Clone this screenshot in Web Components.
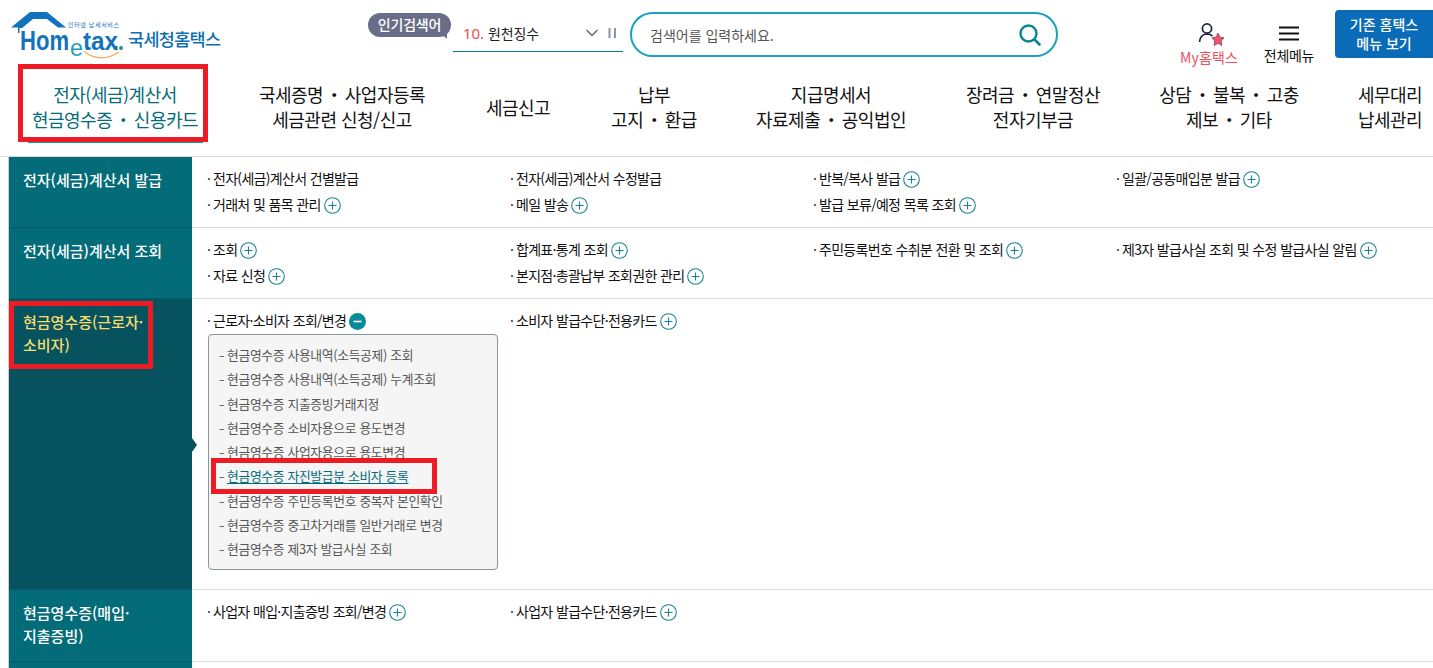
<!DOCTYPE html>
<html lang="ko"><head><meta charset="utf-8"><title>Hometax</title>
<style>
html,body{margin:0;padding:0;background:#fff;overflow:hidden}
body{width:1433px;height:668px;font-family:"Noto Sans CJK KR","Noto Sans",sans-serif;color:#111}
</style></head><body>
<ht-header></ht-header>
<ht-nav>
<ht-nav-item w="230" active marked>전자(세금)계산서<br>현금영수증 <ht-dot>・</ht-dot> 신용카드</ht-nav-item>
<ht-nav-item w="224">국세증명 <ht-dot>・</ht-dot> 사업자등록<br>세금관련 신청/신고</ht-nav-item>
<ht-nav-item w="128">세금신고</ht-nav-item>
<ht-nav-item w="144">납부<br>고지 <ht-dot>・</ht-dot> 환급</ht-nav-item>
<ht-nav-item w="210">지급명세서<br>자료제출 <ht-dot>・</ht-dot> 공익법인</ht-nav-item>
<ht-nav-item w="194">장려금 <ht-dot>・</ht-dot> 연말정산<br>전자기부금</ht-nav-item>
<ht-nav-item w="198">상담 <ht-dot>・</ht-dot> 불복 <ht-dot>・</ht-dot> 고충<br>제보 <ht-dot>・</ht-dot> 기타</ht-nav-item>
<ht-nav-item w="105" pl="19">세무대리<br>납세관리</ht-nav-item>
</ht-nav>
<ht-menu></ht-menu>
<script>
function def(name, css, html, init){
  customElements.define(name, class extends HTMLElement{
    connectedCallback(){
      if(this.shadowRoot) return;
      const r=this.attachShadow({mode:'open'});
      r.innerHTML='<style>'+css+'</style>'+(typeof html==='function'?html(this):html);
      if(init) init(this,r);
    }
  });
}
const FONT='"Noto Sans CJK KR","Noto Sans",sans-serif';
def('ht-dot',`:host{display:inline;margin:0 -2.5px}`,`<slot></slot>`);
def('ht-logo',`:host{display:block;width:215px;height:54px;flex:none}svg{display:block}
text{font-family:"Liberation Sans",sans-serif}`,
`<svg width="215" height="54" viewBox="8 8 215 54">
<path d="M11 27.5 L30 12 H47 L66 27.5 H58 L47 19 H33 L22 28 H19.5 V33 H18 V27.5 Z" fill="#1272bb"/>
<text x="20" y="49.5" font-size="27" font-weight="700" fill="#1272bb" textLength="49" lengthAdjust="spacingAndGlyphs">Hom</text>
<text x="70" y="56" font-size="24" fill="#1ba0b6" textLength="13" lengthAdjust="spacingAndGlyphs">e</text>
<text x="83" y="49.5" font-size="25" font-weight="700" fill="#1272bb" textLength="35" lengthAdjust="spacingAndGlyphs">tax</text>
<rect x="114.5" y="46" width="3" height="3.2" fill="#1272bb"/>
<circle cx="121" cy="48" r="1.9" fill="#1e8f6e"/>
<path d="M84 51.5 Q101 64 119 52" fill="none" stroke="#efa94b" stroke-width="1.1"/>
<text x="68" y="27" font-size="6" fill="#1272bb" style='font-family:${FONT}' textLength="51">인터넷 납세서비스</text>
<text x="128" y="46" font-size="17.5" font-weight="500" fill="#0e6fb4" style='font-family:${FONT}' textLength="93">국세청홈택스</text>
</svg>`);
def('ht-popular',`:host{display:block;position:relative;width:83px;height:24px;margin-top:13px;flex:none;background:#696d87;border-radius:12px;color:#fff;font-size:14px;font-weight:500;line-height:23px;text-align:center;letter-spacing:-.2px}
svg{position:absolute;right:3px;top:20px}`,
`인기검색어<svg width="10" height="10" viewBox="0 0 10 10"><path d="M0 0H9V6 L7 4 Q4 2 0 3Z" fill="#696d87"/></svg>`);
def('ht-rolling',`:host{display:flex;align-items:center;box-sizing:border-box;width:170px;height:41px;margin:11px 0 0 2px;padding:4px 6px 0 10px;border-bottom:1px solid #0a7f93;flex:none;font-size:14px;color:#222;letter-spacing:-.1px}
b{font-weight:400;font-size:15px;color:#f1484c;font-family:"Noto Sans",sans-serif;margin-right:4px}
.t{flex:1}
svg{display:block;margin-left:4px}`,
`<span class="t"><b>10.</b>원천징수</span>
<svg width="14" height="10" viewBox="0 0 14 10"><path d="M1.5 2 L7 7.5 L12.5 2" fill="none" stroke="#5d6670" stroke-width="1.3"/></svg>
<svg style="margin-left:9px" width="9" height="12" viewBox="0 0 9 12"><path d="M1.5 1V11M7 1V11" stroke="#8d96a0" stroke-width="2"/></svg>`);
def('ht-search',`:host{display:flex;align-items:center;box-sizing:border-box;width:428px;height:45px;margin:12px 0 0 7px;padding:0 14px 0 18px;border:2px solid #18a2c0;border-radius:23px;flex:none;font-size:14px;color:#555;letter-spacing:0}
span{flex:1}svg{display:block}`,
`<span>검색어를 입력하세요.</span><svg width="24" height="24" viewBox="0 0 24 24"><circle cx="10.5" cy="10.5" r="8" fill="none" stroke="#0c8397" stroke-width="2.4"/><path d="M16.5 16.5 L21.5 21.5" stroke="#0c8397" stroke-width="2.6" stroke-linecap="round"/></svg>`);
def('ht-util',`:host{display:flex;flex-direction:column;align-items:center;flex:none;font-size:14px;letter-spacing:-.3px}
.i{height:26px;display:flex;align-items:flex-end;justify-content:center}
.l{line-height:18px;margin-top:2px}
:host(.my){letter-spacing:.1px}`,
(h)=>`<div class="i"><slot name="i"></slot></div><div class="l" style="color:${h.getAttribute('color')||'#111'}"><slot></slot></div>`);
def('ht-legacy-btn',`:host{display:flex;align-items:center;justify-content:center;width:98px;height:48px;margin-top:10px;flex:none;background:#0a6cb8;border-radius:4px 0 0 4px;color:#fff;font-size:14px;font-weight:500;line-height:19px;text-align:center;letter-spacing:0}`,
`<div>기존 홈택스<br>메뉴 보기</div>`);
def('ht-header',`:host{display:flex;align-items:flex-start;height:64px}
ht-logo{margin:8px 0 0 8px}
ht-popular{margin-left:145px}
.my{margin:20px 0 0 111px;width:80px}
.all{margin:18px 0 0 0;width:80px}
ht-legacy-btn{margin-left:6px}`,
`<ht-logo></ht-logo><ht-popular></ht-popular><ht-rolling></ht-rolling><ht-search></ht-search>
<ht-util class="my" color="#e8515f"><svg slot="i" width="30" height="26" viewBox="0 0 30 26"><circle cx="13" cy="8.5" r="4.6" fill="none" stroke="#1c2340" stroke-width="1.7"/><path d="M5.5 22 Q6 14.5 13 14 Q16.5 14 18.5 16" fill="none" stroke="#1c2340" stroke-width="1.7"/><path d="M24 13 L26 17.2 L30 17.8 L27.2 21 L27.9 25.5 L24 23.3 L20.1 25.5 L20.8 21 L18 17.8 L22 17.2Z" fill="#ef5275" stroke="#6b3a45" stroke-width=".7"/></svg>My홈택스</ht-util>
<ht-util class="all"><svg slot="i" width="22" height="20" viewBox="0 0 22 20"><path d="M1 3.5H21M1 9.5H21M1 15.5H21" stroke="#111" stroke-width="2"/></svg>전체메뉴</ht-util>
<ht-legacy-btn></ht-legacy-btn>`);
def('ht-nav',`:host{display:flex;height:93px;box-sizing:border-box;border-bottom:1px solid #dcdcdc;position:relative}`,`<slot></slot>`);
def('ht-nav-item',`:host{display:flex;flex:none;align-items:flex-start;justify-content:center;text-align:center;box-sizing:border-box;position:relative;height:78px;font-size:18px;line-height:25px;letter-spacing:-.5px;color:#111}
:host([active]){color:#046c78}
.in{height:78px;display:flex;align-items:center;padding-top:8px;box-sizing:border-box}
.u{position:absolute;left:28px;width:175px;bottom:-1px;height:2px;background:#0e9db5}
.m{position:absolute;left:18px;top:0;width:190px;height:78px;box-sizing:border-box;border:5px solid #ed1c24}`,
(h)=>`<div class="in"><div><slot></slot></div></div>${h.hasAttribute('active')?'<div class="u"></div>':''}${h.hasAttribute('marked')?'<div class="m"></div>':''}`,
(h)=>{h.style.width=h.getAttribute('w')+'px';if(h.hasAttribute('pl'))h.style.paddingLeft=h.getAttribute('pl')+'px';});
def('ht-plus',`:host{display:inline-block;width:17px;height:17px;margin-left:3px;vertical-align:-4px}svg{display:block}`,
(h)=>h.hasAttribute('minus')?`<svg width="17" height="17" viewBox="0 0 17 17"><circle cx="8.5" cy="8.5" r="8.5" fill="#088a98"/><path d="M4.5 8.5H12.5" stroke="#fff" stroke-width="1.6"/></svg>`:
`<svg width="17" height="17" viewBox="0 0 17 17"><circle cx="8.5" cy="8.5" r="7.8" fill="#fff" stroke="#1a8391" stroke-width="1.1"/><path d="M4.5 8.5H12.5M8.5 4.5V12.5" stroke="#1a8391" stroke-width="1.1"/></svg>`);
def('ht-link',`:host{display:block;height:26px;line-height:22px;font-size:14px;letter-spacing:-.7px;word-spacing:.2px;color:#111;white-space:nowrap}
.d{display:inline-block;width:6px;color:#333}`,
(h)=>`<span class="d">·</span><slot></slot>${h.hasAttribute('plus')?'<ht-plus></ht-plus>':''}${h.hasAttribute('minus')?'<ht-plus minus></ht-plus>':''}`);
def('ht-col',`:host{display:block;flex:none;width:303px}`,`<slot></slot>`);
def('ht-row',`:host{display:flex;box-sizing:border-box;border-bottom:1px solid #dcdcdc}
.side{flex:none;box-sizing:border-box;width:183px;padding:11px 14px 0;position:relative;background:#046c78;color:#fff;font-size:15px;font-weight:500;line-height:23px;letter-spacing:0;box-shadow:0 1px 0 #055a66}
:host([open]) .side{background:#06535f;color:#f5dc6e}
.arr{position:absolute;right:-5px;top:139px;width:0;height:0;border:7px solid transparent;border-left:5px solid #06535f;border-right:0}
.m{position:absolute;left:0;top:2px;width:144px;height:68px;box-sizing:border-box;border:5px solid #ed1c24}
.main{flex:1;display:flex;padding:10px 0 0 15px;min-width:0}`,
(h)=>`<div class="side">${h.getAttribute('label')}${h.hasAttribute('open')?'<div class="arr"></div><div class="m"></div>':''}</div><div class="main"><slot></slot></div>`,
(h)=>{h.style.height=h.getAttribute('h')+'px';});
def('ht-sub',`:host{display:block;position:relative;box-sizing:border-box;width:290px;height:236px;margin:-1px 0 0 1px;padding:8px 10px 0;background:#f5f5f5;border:1px solid #8a9499;border-radius:4px}`,`<slot></slot>`);
def('ht-sub-item',`:host{display:block;position:relative;height:24.25px;line-height:23.5px;font-size:12.8px;letter-spacing:-.33px;color:#555;white-space:nowrap}
:host([on]) a{color:#046c78;text-decoration:underline;text-underline-offset:2px}
a{color:inherit;text-decoration:none}
i{display:inline-block;width:8px;font-style:normal;transform:scaleX(.8);transform-origin:0 50%}
.m{position:absolute;left:-8px;top:-6px;width:226px;height:36px;box-sizing:border-box;border:5px solid #ed1c24}`,
(h)=>`<i>–</i><a><slot></slot></a>${h.hasAttribute('on')?'<div class="m"></div>':''}`);
def('ht-menu',`:host{display:block;box-sizing:border-box;margin-left:8px;border-left:1px solid #d0d0d0;height:511px;overflow:hidden}`,`<slot></slot>`);
const P=s=>`<ht-link plus>${s}</ht-link>`, N=s=>`<ht-link>${s}</ht-link>`;
const col=s=>`<ht-col>${s}</ht-col>`;
const subs=['현금영수증 사용내역(소득공제) 조회','현금영수증 사용내역(소득공제) 누계조회','현금영수증 지출증빙거래지정','현금영수증 소비자용으로 용도변경','현금영수증 사업자용으로 용도변경','현금영수증 자진발급분 소비자 등록','현금영수증 주민등록번호 중복자 본인확인','현금영수증 중고차거래를 일반거래로 변경','현금영수증 제3자 발급사실 조회'];
document.querySelector('ht-menu').innerHTML=`
<ht-row h="71" label="전자(세금)계산서 발급">${col(N('전자(세금)계산서 건별발급')+P('거래처 및 품목 관리'))}${col(N('전자(세금)계산서 수정발급')+P('메일 발송'))}${col(P('반복/복사 발급')+P('발급 보류/예정 목록 조회'))}${col(P('일괄/공동매입분 발급'))}</ht-row>
<ht-row h="71" label="전자(세금)계산서 조회">${col(P('조회')+P('자료 신청'))}${col(P('합계표·통계 조회')+P('본지점·총괄납부 조회권한 관리'))}${col(P('주민등록번호 수취분 전환 및 조회'))}${col(P('제3자 발급사실 조회 및 수정 발급사실 알림'))}</ht-row>
<ht-row h="291" open label="현금영수증(근로자·<br>소비자)">${col(`<ht-link minus>근로자·소비자 조회/변경</ht-link><ht-sub>${subs.map((s,i)=>`<ht-sub-item${i==5?' on':''}>${s}</ht-sub-item>`).join('')}</ht-sub>`)}${col(P('소비자 발급수단·전용카드'))}</ht-row>
<ht-row h="72" label="현금영수증(매입·<br>지출증빙)">${col(P('사업자 매입·지출증빙 조회/변경'))}${col(P('사업자 발급수단·전용카드'))}</ht-row>
<ht-row h="20" label=""></ht-row>`;
</script>
</body></html>
